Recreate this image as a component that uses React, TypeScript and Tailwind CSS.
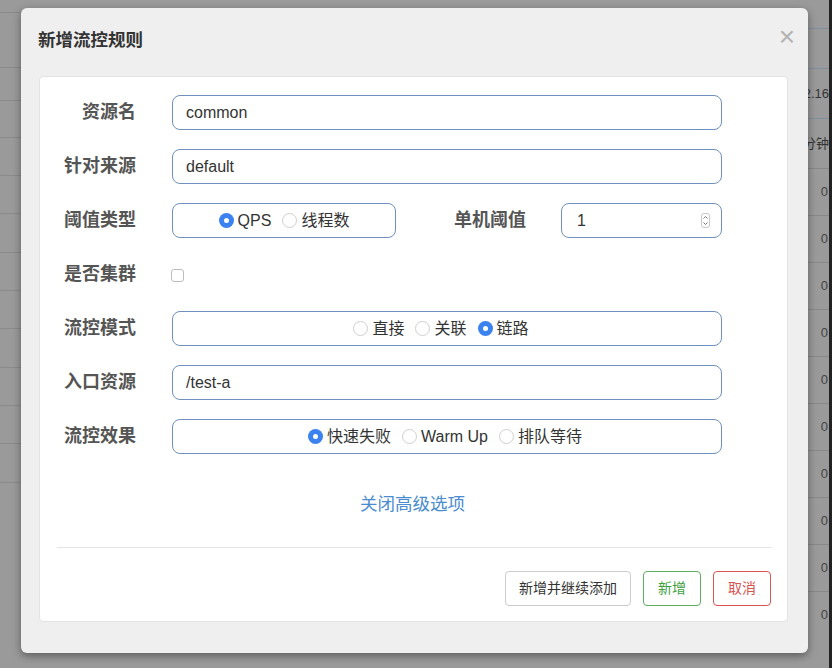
import React from 'react';

const FONT = { fontFamily: '"Liberation Sans", "Noto Sans CJK SC", sans-serif' };

const Radio: React.FC<{ checked?: boolean; label: string }> = ({ checked, label }) => (
  <label className="flex items-center gap-[4px]">
    {checked ? (
      <span className="w-[15px] h-[15px] rounded-full bg-[#3b82f0] flex items-center justify-center">
        <span className="w-[5px] h-[5px] rounded-full bg-white" />
      </span>
    ) : (
      <span className="w-[15px] h-[15px] rounded-full border border-[#cfcfcf] bg-white" />
    )}
    <span className="text-[16px] text-[#333]">{label}</span>
  </label>
);

const Row: React.FC<{ label: string; children: React.ReactNode }> = ({ label, children }) => (
  <div className="flex items-center h-[35px]">
    <div className="w-[96px] text-right text-[18px] font-bold text-[#555] shrink-0">{label}</div>
    <div className="ml-[36px] flex-1 flex items-center h-full">{children}</div>
  </div>
);

const boxCls = 'h-full rounded-[8px] border border-[#6f90c0] bg-white flex items-center';

export default function App() {
  const leftLines = [12, 67, 100, 137, 175, 213, 252, 290, 328, 367, 405, 443, 482];
  const rightRows = ['', '2.16', '分钟', '0', '0', '0', '0', '0', '0', '0', '0', '0', '0'];

  return (
    <div className="relative w-[832px] h-[668px] bg-[#9a9a9a] overflow-hidden" style={FONT}>
      {/* background table behind overlay */}
      <div className="flex h-full">
        <div className="w-[24px] relative">
          {leftLines.map((y) => (
            <div key={y} className="absolute left-0 right-0 h-px bg-[#8a8a8a]" style={{ top: y }} />
          ))}
        </div>
        <div className="flex-1" />
        <div className="w-[29px] flex flex-col pt-[28px] pr-[3px]">
          {rightRows.map((t, i) => (
            <div
              key={i}
              className={`border-t flex items-center justify-end whitespace-nowrap text-[13px] text-[#333] ${i === 0 ? 'h-[40px] border-[#7f8fa0]' : i < 3 ? 'h-[50px] border-[#7f8fa0]' : 'h-[47px] border-[#888]'}`}
            >
              <span className={i >= 3 ? 'mr-[1px] text-[#444]' : ''}>{t}</span>
            </div>
          ))}
        </div>
      </div>
      <div className="absolute top-0 bottom-0 right-0 w-[3px] bg-[#222]" />

      {/* dialog */}
      <div className="absolute left-[21px] top-[8px] w-[787px] h-[645px] bg-[#efefef] rounded-[6px] shadow-[0_3px_9px_rgba(0,0,0,0.4)] flex flex-col pl-[18px] pr-[20px] pb-[31px]">
        <div className="h-[68px] flex items-start justify-between pt-[19px]">
          <h3 className="text-[17.5px] font-bold text-[#333] -ml-px">新增流控规则</h3>
          <span className="text-[28px] leading-none text-[#b3b3b3] -mt-[4px] -mr-[7px]">×</span>
        </div>

        <div className="flex-1 bg-white rounded-[4px] border border-[#e3e3e3] flex flex-col pt-[18px]">
          <div className="flex flex-col gap-[19px] pr-[65px]">
            <Row label="资源名">
              <div className={`${boxCls} flex-1 px-[13px] text-[16px] text-[#333]`}>common</div>
            </Row>
            <Row label="针对来源">
              <div className={`${boxCls} flex-1 px-[13px] text-[16px] text-[#333]`}>default</div>
            </Row>
            <Row label="阈值类型">
              <div className={`${boxCls} w-[224px] justify-center gap-[11px]`}>
                <Radio checked label="QPS" />
                <Radio label="线程数" />
              </div>
              <div className="flex-1 text-right text-[18px] font-bold text-[#555] pr-[35px]">单机阈值</div>
              <div className={`${boxCls} w-[161px] px-[15px] justify-between`}>
                <span className="text-[16px] text-[#333]">1</span>
                <span className="flex flex-col items-center justify-center w-[9px] h-[15px] rounded-[3px] border border-[#c8c8c8] -mr-[4px]">
                  <svg width="5" height="11" viewBox="0 0 5 11">
                    <path d="M0.5 3.5 L2.5 1.5 L4.5 3.5 M0.5 7.5 L2.5 9.5 L4.5 7.5" fill="none" stroke="#777" strokeWidth="1" />
                  </svg>
                </span>
              </div>
            </Row>
            <Row label="是否集群">
              <span className="w-[13px] h-[13px] rounded-[3px] border border-[#bdbdbd] bg-white mt-[1px] -ml-[1px]" />
            </Row>
            <Row label="流控模式">
              <div className={`${boxCls} flex-1 justify-center gap-[11px] pr-[12px]`}>
                <Radio label="直接" />
                <Radio label="关联" />
                <Radio checked label="链路" />
              </div>
            </Row>
            <Row label="入口资源">
              <div className={`${boxCls} flex-1 px-[13px] text-[16px] text-[#333]`}>/test-a</div>
            </Row>
            <Row label="流控效果">
              <div className={`${boxCls} flex-1 justify-center gap-[11px] pr-[4px]`}>
                <Radio checked label="快速失败" />
                <Radio label="Warm Up" />
                <Radio label="排队等待" />
              </div>
            </Row>
          </div>

          <div className="mt-[37px] h-[24px] flex justify-center text-[17.5px] text-[#4a8cd0] pr-[2px]">关闭高级选项</div>

          <div className="mt-[32px] ml-[17px] mr-[15px] border-t border-[#e5e5e5]" />

          <div className="flex justify-end gap-[12px] mt-[23px] mr-[16px]">
            <button className="h-[35px] px-[13px] rounded-[4px] border border-[#cccccc] bg-white text-[14px] text-[#333]">新增并继续添加</button>
            <button className="h-[35px] w-[58px] rounded-[4px] border border-[#5cae5c] bg-white text-[14px] text-[#3e9f3e]">新增</button>
            <button className="h-[35px] w-[58px] rounded-[4px] border border-[#d9534f] bg-white text-[14px] text-[#d9534f]">取消</button>
          </div>
        </div>
      </div>
    </div>
  );
}
